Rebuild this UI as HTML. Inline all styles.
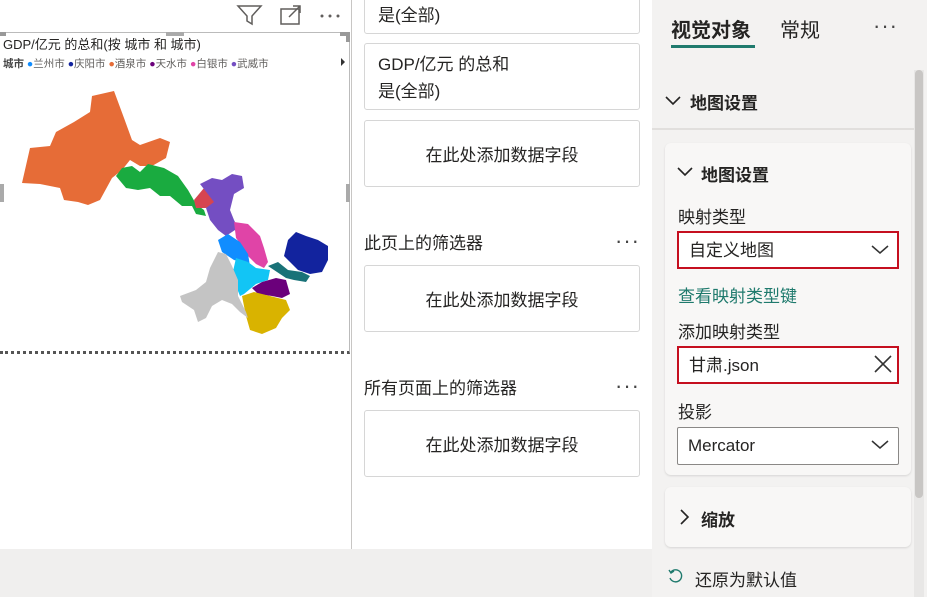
<!DOCTYPE html>
<html><head><meta charset="utf-8"><style>
*{margin:0;padding:0;box-sizing:border-box}
body{width:927px;height:597px;overflow:hidden;background:#fff;font-family:"Liberation Sans","Noto Sans CJK SC",sans-serif;color:#252423;position:relative}
.abs{position:absolute}
.card{position:absolute;left:364px;width:276px;background:#fff;border:1px solid #d6d6d6;border-radius:3px;font-size:17px}
.add{display:flex;align-items:center;justify-content:center}
.rp{position:absolute;left:652px;top:0;width:275px;height:597px;background:#f3f2f1}
.box{position:absolute;left:677px;width:222px;height:38px;background:#fff;font-size:17px;padding-left:10px;line-height:36px}
.red{border:2px solid #c50f1f}
.dots{font-size:22px;letter-spacing:1px;color:#444}
</style></head><body>
<div class="abs" style="left:0;top:549px;width:652px;height:48px;background:#f0efee"></div>
<div class="abs" style="left:351px;top:0;width:1px;height:549px;background:#c8c6c4"></div>
<svg class="abs" style="left:236px;top:3px" width="110" height="24" viewBox="0 0 110 24">
<path d="M2 3H25L16 13V21L11 18V13Z" fill="none" stroke="#605e5c" stroke-width="1.5"/>
<rect x="45" y="6" width="18" height="15" fill="none" stroke="#605e5c" stroke-width="1.5"/>
<path d="M53 14L64 3M57 3H64V10" fill="none" stroke="#605e5c" stroke-width="1.5"/>
<circle cx="86" cy="13" r="1.5" fill="#605e5c"/><circle cx="94" cy="13" r="1.5" fill="#605e5c"/><circle cx="102" cy="13" r="1.5" fill="#605e5c"/>
</svg>
<div class="abs" style="left:0;top:32px;width:350px;height:322px;border-top:1px solid #bbb;border-right:1px solid #bbb;border-bottom:3px dotted #555"></div>
<div class="abs" style="left:0;top:32px;width:6px;height:4px;background:#999"></div>
<div class="abs" style="left:340px;top:32px;width:10px;height:4px;background:#999"></div>
<div class="abs" style="left:346px;top:32px;width:4px;height:10px;background:#999"></div>
<div class="abs" style="left:166px;top:32px;width:18px;height:4px;background:#aaa"></div>
<div class="abs" style="left:346px;top:184px;width:4px;height:18px;background:#aaa"></div>
<div class="abs" style="left:0;top:184px;width:4px;height:18px;background:#aaa"></div>
<div class="abs" style="left:3px;top:34px;font-size:13px;color:#252423;white-space:nowrap">GDP/亿元 的总和(按 城市 和 城市)</div>
<div class="abs" style="left:3px;top:56px;font-size:10.5px;color:#605e5c;white-space:nowrap"><b style="color:#444">城市</b> <span style="color:#118dff">●</span>兰州市 <span style="color:#12239e">●</span>庆阳市 <span style="color:#e66c37">●</span>酒泉市 <span style="color:#6b007b">●</span>天水市 <span style="color:#e044a7">●</span>白银市 <span style="color:#744ec2">●</span>武威市</div>
<div class="abs" style="left:341px;top:58px;width:0;height:0;border-left:4px solid #333;border-top:4px solid transparent;border-bottom:4px solid transparent"></div>
<svg class="abs" style="left:0;top:0" width="350" height="350">
<path d="M22 183L30 148L50 146L56 132L74 122L90 112L92 96L114 91L124 118L132 140L140 145L160 138L170 142L166 158L152 166L140 166L130 160L122 170L112 178L100 200L88 205L78 202L64 200L60 188L40 184Z" fill="#e66c37"/>
<path d="M116 176L122 168L132 166L140 172L148 164L164 168L178 176L188 190L196 204L204 210L206 216L196 214L192 206L182 206L170 196L160 196L150 188L138 190L126 188Z" fill="#1aab40"/>
<path d="M194 200L204 188L210 194L216 204L206 208L196 208Z" fill="#d64550"/>
<path d="M200 184L212 178L222 180L232 174L242 176L244 188L234 194L230 210L234 220L238 228L226 236L218 230L210 220L206 208L214 202Z" fill="#744ec2"/>
<path d="M234 222L248 224L260 236L264 248L268 262L264 268L256 264L248 256L242 246L236 238Z" fill="#e044a7"/>
<path d="M218 240L228 234L240 242L248 254L250 266L242 262L234 260L222 252Z" fill="#118dff"/>
<path d="M236 258L248 262L256 268L270 270L268 280L256 284L244 294L240 296L236 286L232 276Z" fill="#12c5f5"/>
<path d="M268 266L278 262L288 270L302 272L310 276L306 282L294 280L286 278Z" fill="#197278"/>
<path d="M288 240L296 232L306 236L318 240L328 246L328 260L322 272L310 274L298 270L290 262L284 256Z" fill="#12239e"/>
<path d="M252 288L262 282L276 278L286 280L290 294L282 298L272 296L258 294Z" fill="#6b007b"/>
<path d="M242 296L254 292L270 296L286 300L290 310L282 318L276 328L262 334L250 330L246 316Z" fill="#d9b300"/>
<path d="M210 268L218 252L226 254L232 266L238 280L238 296L246 312L248 318L240 312L232 304L222 300L212 306L206 318L198 322L194 310L182 302L180 296L196 290L206 282Z" fill="#c4c4c4"/>
</svg>
<div class="card" style="top:-8px;height:42px;padding:8px 13px">是(全部)</div>
<div class="card" style="top:43px;height:67px;padding:7px 13px;line-height:27px">GDP/亿元 的总和<br>是(全部)</div>
<div class="card add" style="top:120px;height:67px">在此处添加数据字段</div>
<div class="abs" style="left:364px;top:229px;font-size:17px">此页上的筛选器</div>
<div class="abs dots" style="left:615px;top:228px">···</div>
<div class="card add" style="top:265px;height:67px">在此处添加数据字段</div>
<div class="abs" style="left:364px;top:374px;font-size:17px">所有页面上的筛选器</div>
<div class="abs dots" style="left:615px;top:373px">···</div>
<div class="card add" style="top:410px;height:67px">在此处添加数据字段</div>
<div class="rp"></div>
<div class="abs" style="left:671px;top:14px;font-size:20px;font-weight:bold">视觉对象</div>
<div class="abs" style="left:671px;top:45px;width:84px;height:3px;background:#1f7a6d"></div>
<div class="abs" style="left:780px;top:14px;font-size:20px">常规</div>
<div class="abs dots" style="left:873px;top:13px">···</div>
<div class="abs" style="left:652px;top:128px;width:262px;height:2px;background:#e1dfdd"></div>
<div class="abs" style="left:914px;top:70px;width:10px;height:527px;background:#e8e7e6"></div>
<div class="abs" style="left:915px;top:70px;width:8px;height:428px;background:#c8c6c4;border-radius:4px"></div>
<svg class="abs" style="left:665px;top:96px" width="16" height="10"><path d="M1 1L8 8L15 1" fill="none" stroke="#252423" stroke-width="1.6"/></svg>
<div class="abs" style="left:690px;top:89px;font-size:17px;font-weight:bold">地图设置</div>
<div class="abs" style="left:665px;top:143px;width:246px;height:332px;background:#f8f7f6;border-radius:6px;box-shadow:0 1px 2px rgba(0,0,0,.12)"></div>
<svg class="abs" style="left:677px;top:167px" width="16" height="10"><path d="M1 1L8 8L15 1" fill="none" stroke="#252423" stroke-width="1.6"/></svg>
<div class="abs" style="left:701px;top:161px;font-size:17px;font-weight:bold">地图设置</div>
<div class="abs" style="left:678px;top:203px;font-size:17px">映射类型</div>
<div class="box red" style="top:231px">自定义地图</div>
<svg class="abs" style="left:871px;top:245px" width="18" height="10"><path d="M1 1L9 8L17 1" fill="none" stroke="#333" stroke-width="1.5"/></svg>
<div class="abs" style="left:678px;top:282px;font-size:17px;color:#1f7a6d">查看映射类型键</div>
<div class="abs" style="left:678px;top:318px;font-size:17px">添加映射类型</div>
<div class="box red" style="top:346px">甘肃.json</div>
<svg class="abs" style="left:874px;top:355px" width="18" height="18"><path d="M1 1L17 17M17 1L1 17" stroke="#333" stroke-width="1.6"/></svg>
<div class="abs" style="left:678px;top:398px;font-size:17px">投影</div>
<div class="box" style="top:427px;border:1px solid #8a8886;border-radius:2px;left:677px">Mercator</div>
<svg class="abs" style="left:871px;top:440px" width="18" height="10"><path d="M1 1L9 8L17 1" fill="none" stroke="#333" stroke-width="1.5"/></svg>
<div class="abs" style="left:665px;top:487px;width:246px;height:60px;background:#f8f7f6;border-radius:6px;box-shadow:0 1px 2px rgba(0,0,0,.12)"></div>
<svg class="abs" style="left:680px;top:509px" width="10" height="16"><path d="M1 1L8 8L1 15" fill="none" stroke="#252423" stroke-width="1.6"/></svg>
<div class="abs" style="left:701px;top:506px;font-size:17px;font-weight:bold">缩放</div>
<svg class="abs" style="left:667px;top:568px" width="16" height="16"><path d="M4 4A6 6 0 1 1 3 10" fill="none" stroke="#1f7a6d" stroke-width="1.4"/><path d="M2 2L4 5L7 3" fill="none" stroke="#1f7a6d" stroke-width="1.4"/></svg>
<div class="abs" style="left:695px;top:566px;font-size:17px">还原为默认值</div>
</body></html>
